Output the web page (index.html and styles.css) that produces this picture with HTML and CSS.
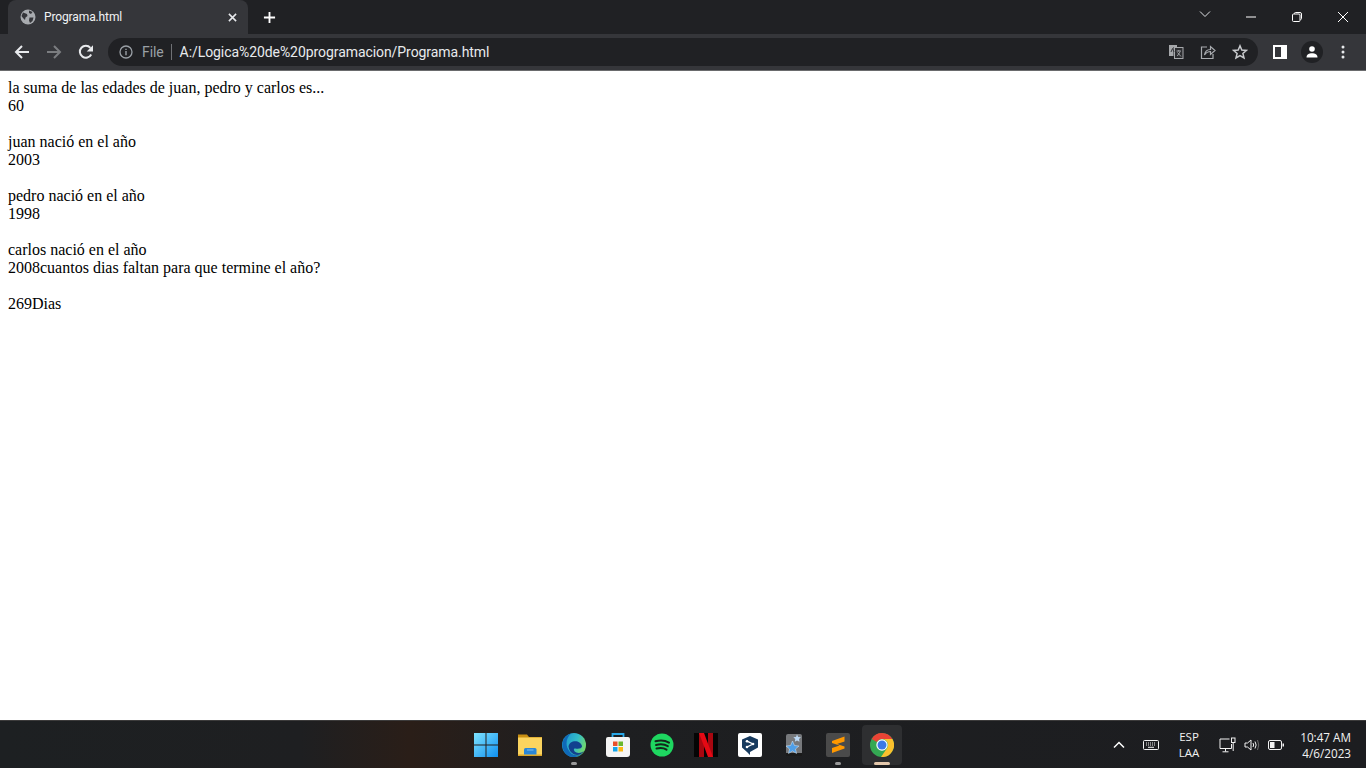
FILE: index.html
```html
<!DOCTYPE html>
<html lang="es">
<head>
<meta charset="utf-8">
<title>Programa.html</title>
<link rel="stylesheet" href="styles.css">
</head>
<body>
<div class="screen">
  <header class="chrome">
    <div class="tabstrip">
      <div class="tab">
        <svg class="favicon" viewBox="0 0 16 16"><circle cx="8" cy="8" r="7.500" fill="#a8abaf"/><path d="M3 3.500 7 5 7.500 7 5.500 8.500 5 11 3 9 1.500 7ZM9 1.500 12.500 3 11 5 9 4ZM9.500 8.500 13.500 8.500 12.500 12 10 14 9 11.500Z" fill="#35363a"/></svg>
        <span class="tab-title">Programa.html</span>
        <svg class="tab-close" viewBox="0 0 10 10"><path d="M1 1 9 9M9 1 1 9" stroke="#e8eaed" stroke-width="1.700"/></svg>
      </div>
      <svg class="new-tab" viewBox="0 0 14 14"><path d="M7 1V13M1 7H13" stroke="#fff" stroke-width="2"/></svg>
      <div class="tabstrip-space"></div>
      <svg class="win chevron" viewBox="0 0 12 8"><path d="M1 1.500 6 6.500 11 1.500" fill="none" stroke="#dfe1e5" stroke-width="1"/></svg>
      <div class="win-btn"><svg class="win" viewBox="0 0 12 12"><path d="M1 6H11" stroke="#fff" stroke-width="1"/></svg></div>
      <div class="win-btn"><svg class="win" viewBox="0 0 12 12"><path d="M3.500 2.800V2.200Q3.500 1.500 4.500 1.500H9Q10.500 1.500 10.500 3V7.500Q10.500 8.500 9.500 8.500M2.500 3H8Q9 3 9 4V9.500Q9 10.500 8 10.500H2.500Q1.500 10.500 1.500 9.500V4Q1.500 3 2.500 3Z" fill="none" stroke="#fff" stroke-width="1"/></svg></div>
      <div class="win-btn"><svg class="win" viewBox="0 0 12 12"><path d="M1 1 11 11M11 1 1 11" stroke="#fff" stroke-width="1"/></svg></div>
    </div>
    <div class="toolbar">
      <svg class="nav" viewBox="0 0 16 16"><path d="M15 8H2.500M8 2 2 8 8 14" fill="none" stroke="#e8eaed" stroke-width="2"/></svg>
      <svg class="nav" viewBox="0 0 16 16"><path d="M1 8H13.500M8 2 14 8 8 14" fill="none" stroke="#7b7d80" stroke-width="2"/></svg>
      <svg class="nav" viewBox="0 0 16 16"><path d="M13.200 10.500A6 6 0 1 1 12.400 3.800" fill="none" stroke="#e8eaed" stroke-width="2"/><path d="M15 1.200V7.500H8.700Z" fill="#e8eaed"/></svg>
      <div class="omnibox">
        <svg class="info" viewBox="0 0 14 14"><circle cx="7" cy="7" r="6" fill="none" stroke="#9aa0a6" stroke-width="1.300"/><path d="M7 6V10.300M7 3.700V5" stroke="#9aa0a6" stroke-width="1.400"/></svg>
        <span class="scheme">File</span>
        <span class="divider"></span>
        <span class="url">A:/Logica%20de%20programacion/Programa.html</span>
        <span class="omni-space"></span>
        <svg class="omni-icon" viewBox="0 0 16 16"><path d="M1 1H9V3H5.500V12H1Z" fill="#a6a8ab"/><rect x="6.500" y="3.500" width="8.500" height="11" fill="#2c2d30" stroke="#a6a8ab" stroke-width="1"/><path d="M3 8 4.500 4.500 6 8" fill="none" stroke="#35363a" stroke-width="1"/><path d="M8.500 7H13M10.800 6V7.500M9.300 12 12.300 7.500M9.500 8.500 13 12.500" fill="none" stroke="#a6a8ab" stroke-width="0.900"/></svg>
        <svg class="omni-icon" viewBox="0 0 16 16"><path d="M7 3H1.500V14.500H13V10" fill="none" stroke="#a9acb0" stroke-width="1.200"/><path d="M4.500 11C5 7.500 7.500 5.500 10.500 5.500V2.500L15 6.500 10.500 10.500V7.500C8 7.500 6 8.800 4.500 11Z" fill="none" stroke="#a9acb0" stroke-width="1.200"/></svg>
        <svg class="omni-icon" viewBox="0 0 16 16"><path d="M8 1.800 9.800 6 14.400 6.400 10.900 9.400 12 13.900 8 11.500 4 13.900 5.100 9.400 1.600 6.400 6.200 6Z" fill="none" stroke="#c8cacd" stroke-width="1.500"/></svg>
      </div>
      <svg class="side" viewBox="0 0 14 14"><path fill-rule="evenodd" d="M0 0H14V14H0ZM2 2V12H8V2Z" fill="#fff"/></svg>
      <div class="avatar"><svg viewBox="0 0 14 14"><circle cx="7" cy="4" r="2.800" fill="#fff"/><path d="M1.500 12.500C1.500 9.500 4 8.200 7 8.200S12.500 9.500 12.500 12.500Z" fill="#fff"/></svg></div>
      <svg class="dots" viewBox="0 0 4 14"><circle cx="2" cy="2" r="1.500" fill="#e8eaed"/><circle cx="2" cy="7" r="1.500" fill="#e8eaed"/><circle cx="2" cy="12" r="1.500" fill="#e8eaed"/></svg>
    </div>
  </header>

  <main class="page">la suma de las edades de juan, pedro y carlos es...<br>60<br><br>juan nació en el año<br>2003<br><br>pedro nació en el año<br>1998<br><br>carlos nació en el año<br>2008cuantos dias faltan para que termine el año?<br><br>269Dias</main>

  <footer class="taskbar">
    <div class="tray-spacer"></div>
    <div class="apps">
      <div class="app"><svg viewBox="0 0 24 24"><defs><linearGradient id="w" x1="0" y1="0" x2="1" y2="1"><stop offset="0" stop-color="#7fe4ff"/><stop offset="1" stop-color="#0f8ff0"/></linearGradient></defs><path d="M0 0H11.500V11.500H0ZM12.500 0H24V11.500H12.500ZM0 12.500H11.500V24H0ZM12.500 12.500H24V24H12.500Z" fill="url(#w)"/></svg></div>
      <div class="app"><svg viewBox="0 0 24 24"><path d="M0 1.500H9L11 4H24V23H0Z" fill="#c98f12"/><path d="M0 4.500H24V23H0Z" fill="#fbd45f"/><path d="M0 21.500H24V23H0Z" fill="#dea727"/><path d="M6 16.500Q6 15 7.500 15H17Q18.500 15 18.500 16.500V21.500H6Z" fill="#2a86d6"/><path d="M9 17H15.500" stroke="#7cc0f0" stroke-width="1"/></svg></div>
      <div class="app"><svg viewBox="0 0 24 24"><defs><linearGradient id="e1" x1="0" y1="0.100" x2="1" y2="0.500"><stop offset="0" stop-color="#1a8fd2"/><stop offset="0.600" stop-color="#32bcc8"/><stop offset="1" stop-color="#72d96c"/></linearGradient></defs><circle cx="12" cy="12" r="12" fill="url(#e1)"/><path d="M2.500 19C-2 12 1 3 9 0.500 4 5 2.500 13 8 19 11 22.500 16 23.500 20.500 20.500 14.500 26 6 25 2.500 19Z" fill="#0f69b8"/><path d="M6.500 13.500C7.500 6.500 18.500 6.500 20 13 20.300 15.500 16.500 16.200 13.500 15.500 11.500 15.200 11.500 17 12.500 18.200 14.500 20.500 19 20.500 22 18 18 24.500 8 23 6.500 13.500Z" fill="#12418f"/></svg><span class="pip"></span></div>
      <div class="app"><svg viewBox="0 0 24 24"><path d="M6.500 6V1H17.500V6" fill="none" stroke="#29a8e8" stroke-width="1.800"/><path d="M0 6Q0 4 2 4H22Q24 4 24 6V21Q24 24 21 24H3Q0 24 0 21Z" fill="#f4f4f4"/><rect x="7" y="8.500" width="4.500" height="4.500" fill="#e8502a"/><rect x="12.500" y="8.500" width="4.500" height="4.500" fill="#6ab82c"/><rect x="7" y="14" width="4.500" height="4.500" fill="#12a3ea"/><rect x="12.500" y="14" width="4.500" height="4.500" fill="#fcb712"/></svg></div>
      <div class="app"><svg viewBox="0 0 24 24"><circle cx="12" cy="12" r="11.500" fill="#1ed760"/><path d="M5.500 8.300C10 7 15 7.300 19 9.600M6 12C10 11 14.500 11.200 17.800 13.200M6.500 15.500C10 14.700 13.800 14.900 16.500 16.600" fill="none" stroke="#14251a" stroke-width="2" stroke-linecap="round"/></svg></div>
      <div class="app"><svg viewBox="0 0 24 24"><rect width="24" height="24" fill="#050505"/><path d="M5 0H10V24H5ZM14 0H19V24H14Z" fill="#a80710"/><path d="M5 0H10L19 24H14Z" fill="#e50914"/></svg></div>
      <div class="app"><svg viewBox="0 0 24 24"><rect width="24" height="24" rx="2" fill="#fff"/><path d="M12 3 20 6.500V14.500L12 19V22L9 19 4 14.500V6.500Z" fill="#173a5e"/><path d="M9 8.200 15 11 9 14" fill="none" stroke="#fff" stroke-width="1.300"/><circle cx="9" cy="8.200" r="1.300" fill="#fff"/><circle cx="15" cy="11" r="1.300" fill="#fff"/><circle cx="9" cy="14" r="1.300" fill="#fff"/></svg></div>
      <div class="app"><svg viewBox="0 0 24 24"><rect x="4" y="1" width="16" height="22" rx="2" fill="#77797c"/><rect x="4" y="20" width="16" height="3" fill="#1a1a1a"/><path d="M15 1.500 16.200 4 19 4.300 17 6 17.500 8.700 15 7.500 12.800 8.700 13.300 6 11.300 4.300 14 4Z" fill="#bcd9f5"/><path d="M10.500 8 12.500 12.500 17 13 13.500 16 14.600 20.500 10.500 18 6.500 20.500 7.500 16 4 13 8.600 12.500Z" fill="#4f9fe8" stroke="#dfeaf5" stroke-width="0.500"/></svg></div>
      <div class="app"><svg viewBox="0 0 24 24"><rect width="24" height="24" rx="2" fill="#4a4a4a"/><path d="M18.500 3.500V8.500L11 11 18.500 13.500V15.500L6 20V15L13.500 12.500 6 10V8Z" fill="#ff9800"/></svg><span class="pip"></span></div>
      <div class="app active"><svg viewBox="0 0 24 24"><circle cx="12" cy="12" r="12" fill="#34a853"/><path d="M12 0A12 12 0 0 1 22.400 6H12A6 6 0 0 0 6.800 9L1.700 5.900A12 12 0 0 1 12 0Z" fill="#ea4335"/><path d="M22.400 6A12 12 0 0 1 11 24L17.200 15A6 6 0 0 0 17.200 9 6 6 0 0 0 12 6Z" fill="#fbc02d"/><circle cx="12" cy="12" r="5.700" fill="#fff"/><circle cx="12" cy="12" r="4.500" fill="#3b78e7"/></svg><span class="pip wide"></span></div>
    </div>
    <div class="tray">
      <svg class="caret" viewBox="0 0 12 8"><path d="M1 6.500 6 1.500 11 6.500" fill="none" stroke="#fff" stroke-width="1.500"/></svg>
      <svg class="kbd" viewBox="0 0 16 12"><rect x="0.500" y="1.500" width="15" height="9" rx="1" fill="none" stroke="#f2f2f2"/><path d="M3 4H13M3 6H13" stroke="#f2f2f2" stroke-dasharray="1 1"/><path d="M5 8.300H11" stroke="#f2f2f2"/></svg>
      <div class="lang"><span>ESP</span><span>LAA</span></div>
      <div class="sys">
        <svg class="net" viewBox="0 0 18 16"><path d="M10.500 2H1V11.500H12.500V7M6.500 11.500V14.500M3.500 14.800H9.500" fill="none" stroke="#f2f2f2" stroke-width="1"/><rect x="12.500" y="1" width="3.500" height="4.500" fill="none" stroke="#f2f2f2"/><path d="M14.200 5.500V14" stroke="#f2f2f2"/></svg>
        <svg class="vol" viewBox="0 0 16 14"><path d="M1 5H3.500L7 2V12L3.500 9H1Z" fill="none" stroke="#f2f2f2"/><path d="M9 5Q10.300 7 9 9M11 3.500Q13.300 7 11 10.500" fill="none" stroke="#f2f2f2"/><path d="M13.500 2Q16 7 13.500 12" fill="none" stroke="#6a6a6a"/></svg>
        <svg class="bat" viewBox="0 0 16 10"><rect x="0.500" y="0.500" width="13" height="9" rx="1.500" fill="none" stroke="#f2f2f2"/><rect x="2" y="2" width="4.500" height="6" fill="#f2f2f2"/><rect x="14.500" y="3.500" width="1.500" height="3" fill="#f2f2f2"/></svg>
      </div>
      <div class="clock"><span>10:47 AM</span><span>4/6/2023</span></div>
    </div>
  </footer>
</div>
</body>
</html>
```

FILE: styles.css
```css
* { box-sizing: border-box; }
html, body { margin: 0; height: 100%; overflow: hidden; }
svg { display: block; flex: none; }

.screen {
  width: 1366px;
  height: 768px;
  display: flex;
  flex-direction: column;
  background: #fff;
}

.chrome { height: 71px; flex: none; background: #35363a; border-bottom: 1px solid #6a6b6d; }

.tabstrip {
  height: 34px;
  background: #202124;
  display: flex;
  align-items: center;
  padding-left: 8px;
}
.tab {
  width: 240px;
  height: 34px;
  align-self: flex-end;
  background: #35363a;
  border-radius: 8px 8px 0 0;
  display: flex;
  align-items: center;
  padding: 0 8px 0 12px;
}
.favicon { width: 16px; height: 16px; }
.tab-title {
  margin-left: 8px;
  font: 12px/16px "Roboto", "Liberation Sans", sans-serif;
  letter-spacing: -0.12px;
  color: #f1f3f4;
  flex: 1;
}
.tab-close { width: 9px; height: 9px; margin-right: 3px; }
.new-tab { width: 13px; height: 13px; margin-left: 15px; }
.tabstrip-space { flex: 1; }
.win { width: 12px; height: 12px; }
.chevron { height: 8px; margin-right: 17px; margin-top: -6px; }
.win-btn { width: 46px; height: 34px; display: flex; align-items: center; justify-content: center; }

.toolbar {
  height: 36px;
  display: flex;
  align-items: center;
  padding: 0 0 0 14px;
}
.nav { width: 16px; height: 16px; margin-right: 16px; }
.omnibox {
  width: 1150px;
  height: 28px;
  margin-left: -2px;
  background: #202124;
  border-radius: 14px;
  display: flex;
  align-items: center;
  padding: 0 10px 0 11px;
}
.info { width: 14px; height: 14px; }
.scheme { margin-left: 9px; font: 14px/18px "Roboto", "Liberation Sans", sans-serif; letter-spacing: -0.1px; color: #9aa0a6; }
.divider { width: 1px; height: 16px; background: #6f7175; margin: 0 8px 0 7px; }
.url { font: 14px/18px "Roboto", "Liberation Sans", sans-serif; letter-spacing: -0.07px; color: #e8eaed; }
.omni-space { flex: 1; }
.omni-icon { width: 16px; height: 16px; margin-left: 16px; }
.side { width: 14px; height: 14px; margin-left: 15px; }
.avatar {
  width: 22px;
  height: 22px;
  margin-left: 14px;
  border-radius: 50%;
  background: #202124;
  display: flex;
  align-items: center;
  justify-content: center;
}
.avatar svg { width: 14px; height: 14px; }
.dots { width: 4px; height: 14px; margin-left: 18px; }

.page {
  flex: 1;
  padding: 8px;
  font: 16px/18px "Liberation Serif", serif;
  color: #000;
}

.taskbar {
  height: 48px;
  flex: none;
  background: linear-gradient(90deg, #1d2022 0, #1e1f21 22%, #2a1e18 30%, #1e1f21 42%, #1c1d20 100%);
  border-top: 1px solid #3c3b3b;
  display: flex;
  align-items: center;
}
.tray-spacer { width: 466px; flex: none; }
.apps { display: flex; align-items: center; gap: 4px; }
.app {
  position: relative;
  width: 40px;
  height: 40px;
  display: flex;
  align-items: center;
  justify-content: center;
  border-radius: 4px;
}
.app svg { width: 24px; height: 24px; }
.app.active { background: #2e2f31; }
.pip {
  position: absolute;
  left: 17px;
  bottom: 0;
  width: 6px;
  height: 3px;
  border-radius: 2px;
  background: #9a9a9a;
}
.pip.wide { left: 12px; width: 16px; background: #e4c8ac; }

.tray {
  margin-left: auto;
  display: flex;
  align-items: center;
  padding-right: 15px;
  color: #f2f2f2;
  font: 12px/16px "Open Sans", "Liberation Sans", sans-serif;
}
.caret { width: 12px; height: 8px; margin-right: 18px; }
.kbd { width: 16px; height: 12px; margin-right: 18px; }
.lang { display: flex; flex-direction: column; align-items: center; width: 24px; margin-right: 18px; font-size: 11.500px; line-height: 16px; }
.sys { display: flex; align-items: center; gap: 7px; margin-right: 15px; }
.net { width: 18px; height: 16px; }
.vol { width: 16px; height: 14px; }
.bat { width: 16px; height: 10px; margin-left: 1px; }
.clock { display: flex; flex-direction: column; align-items: flex-end; width: 52px; font-size: 11.700px; line-height: 16px; }
```
